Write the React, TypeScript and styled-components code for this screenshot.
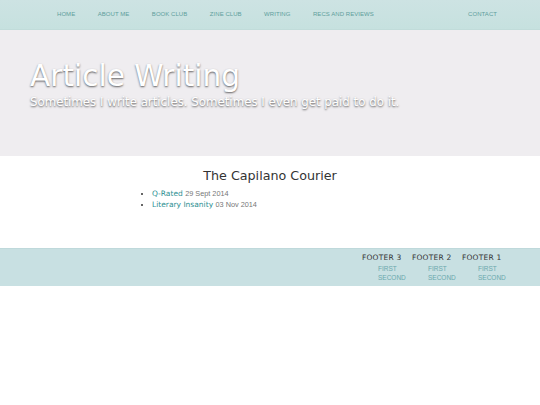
import styled, { createGlobalStyle } from "styled-components";

const GlobalStyle = createGlobalStyle`
  html, body {
    margin: 0;
    padding: 0;
    background: #ffffff;
  }
  body {
    font-family: "DejaVu Sans", "Liberation Sans", sans-serif;
  }
`;

const NavBar = styled.nav`
  height: 30px;
  background: linear-gradient(to bottom, #cde3e3, #c6e1df);
  border-bottom: 1px solid #c1dcda;
  box-sizing: border-box;
  display: flex;
  align-items: center;
  padding: 0 0 1px 57px;
`;

const NavLinks = styled.ul`
  list-style: none;
  margin: 0;
  padding: 0;
  display: flex;
  flex: 1;
`;

const NavItem = styled.li<{ $push?: boolean }>`
  font-family: "Liberation Sans", sans-serif;
  font-size: 6px;
  letter-spacing: 0.05px;
  color: #5f9e9c;
  margin-right: ${(p) => (p.$push ? "43px" : "22.5px")};
  margin-left: ${(p) => (p.$push ? "auto" : "0")};
`;

const Hero = styled.header`
  background: #efedf0;
  height: 126px;
  padding: 29px 30px 0;
  box-sizing: border-box;
`;

const HeroTitle = styled.h1`
  margin: 0;
  font-family: "DejaVu Sans", sans-serif;
  font-weight: normal;
  font-size: 29.6px;
  line-height: 34px;
  color: #ffffff;
  text-shadow: 0 1px 2px rgba(0, 0, 0, 0.6);
`;

const HeroSub = styled.p`
  margin: 2px 0 0;
  font-family: "DejaVu Sans", sans-serif;
  font-size: 11.8px;
  line-height: 15px;
  color: #ffffff;
  text-shadow: 0 1px 2px rgba(0, 0, 0, 0.65);
`;

const Main = styled.main`
  height: 92px;
  padding-top: 11px;
  box-sizing: border-box;
`;

const Section = styled.section`
  width: 250px;
  margin: 0 auto;
`;

const SectionTitle = styled.h2`
  margin: 0 0 3px;
  text-align: center;
  font-weight: normal;
  font-size: 12.7px;
  line-height: 18px;
  color: #333333;
`;

const List = styled.ul`
  margin: 0;
  padding: 0 0 0 7px;
  font-size: 7.5px;
  line-height: 11px;
  color: #333;
`;

const ListItem = styled.li``;

const ArticleLink = styled.a`
  color: #2c8f92;
  text-decoration: none;
`;

const DateText = styled.span`
  font-family: "Liberation Sans", sans-serif;
  font-size: 7.3px;
  color: #777;
`;

const Footer = styled.footer`
  background: #c8e0e2;
  height: 38px;
  border-top: 1px solid #bfd9db;
  box-sizing: border-box;
  display: flex;
  justify-content: flex-end;
  padding: 4px 28px 0 0;
`;

const FooterCol = styled.div`
  width: 50px;
`;

const FooterHead = styled.div`
  font-size: 7.5px;
  line-height: 10px;
  color: #333;
  letter-spacing: 0.2px;
`;

const FooterLinks = styled.ul`
  list-style: none;
  margin: 1px 0 0;
  padding: 0 0 0 16px;
`;

const FooterLink = styled.li`
  font-family: "Liberation Sans", sans-serif;
  font-size: 6.5px;
  line-height: 9px;
  color: #6aa8ad;
`;

const navItems = ["HOME", "ABOUT ME", "BOOK CLUB", "ZINE CLUB", "WRITING", "RECS AND REVIEWS"];

const articles = [
  { title: "Q-Rated", date: "29 Sept 2014" },
  { title: "Literary Insanity", date: "03 Nov 2014" },
];

export default function App() {
  return (
    <>
      <GlobalStyle />
      <NavBar>
        <NavLinks>
          {navItems.map((n) => (
            <NavItem key={n}>{n}</NavItem>
          ))}
          <NavItem $push>CONTACT</NavItem>
        </NavLinks>
      </NavBar>
      <Hero>
        <HeroTitle>Article Writing</HeroTitle>
        <HeroSub>Sometimes I write articles. Sometimes I even get paid to do it.</HeroSub>
      </Hero>
      <Main>
        <Section>
          <SectionTitle>The Capilano Courier</SectionTitle>
          <List>
            {articles.map((a) => (
              <ListItem key={a.title}>
                <ArticleLink href="#">{a.title}</ArticleLink> <DateText>{a.date}</DateText>
              </ListItem>
            ))}
          </List>
        </Section>
      </Main>
      <Footer>
        {["FOOTER 3", "FOOTER 2", "FOOTER 1"].map((f) => (
          <FooterCol key={f}>
            <FooterHead>{f}</FooterHead>
            <FooterLinks>
              <FooterLink>FIRST</FooterLink>
              <FooterLink>SECOND</FooterLink>
            </FooterLinks>
          </FooterCol>
        ))}
      </Footer>
    </>
  );
}
